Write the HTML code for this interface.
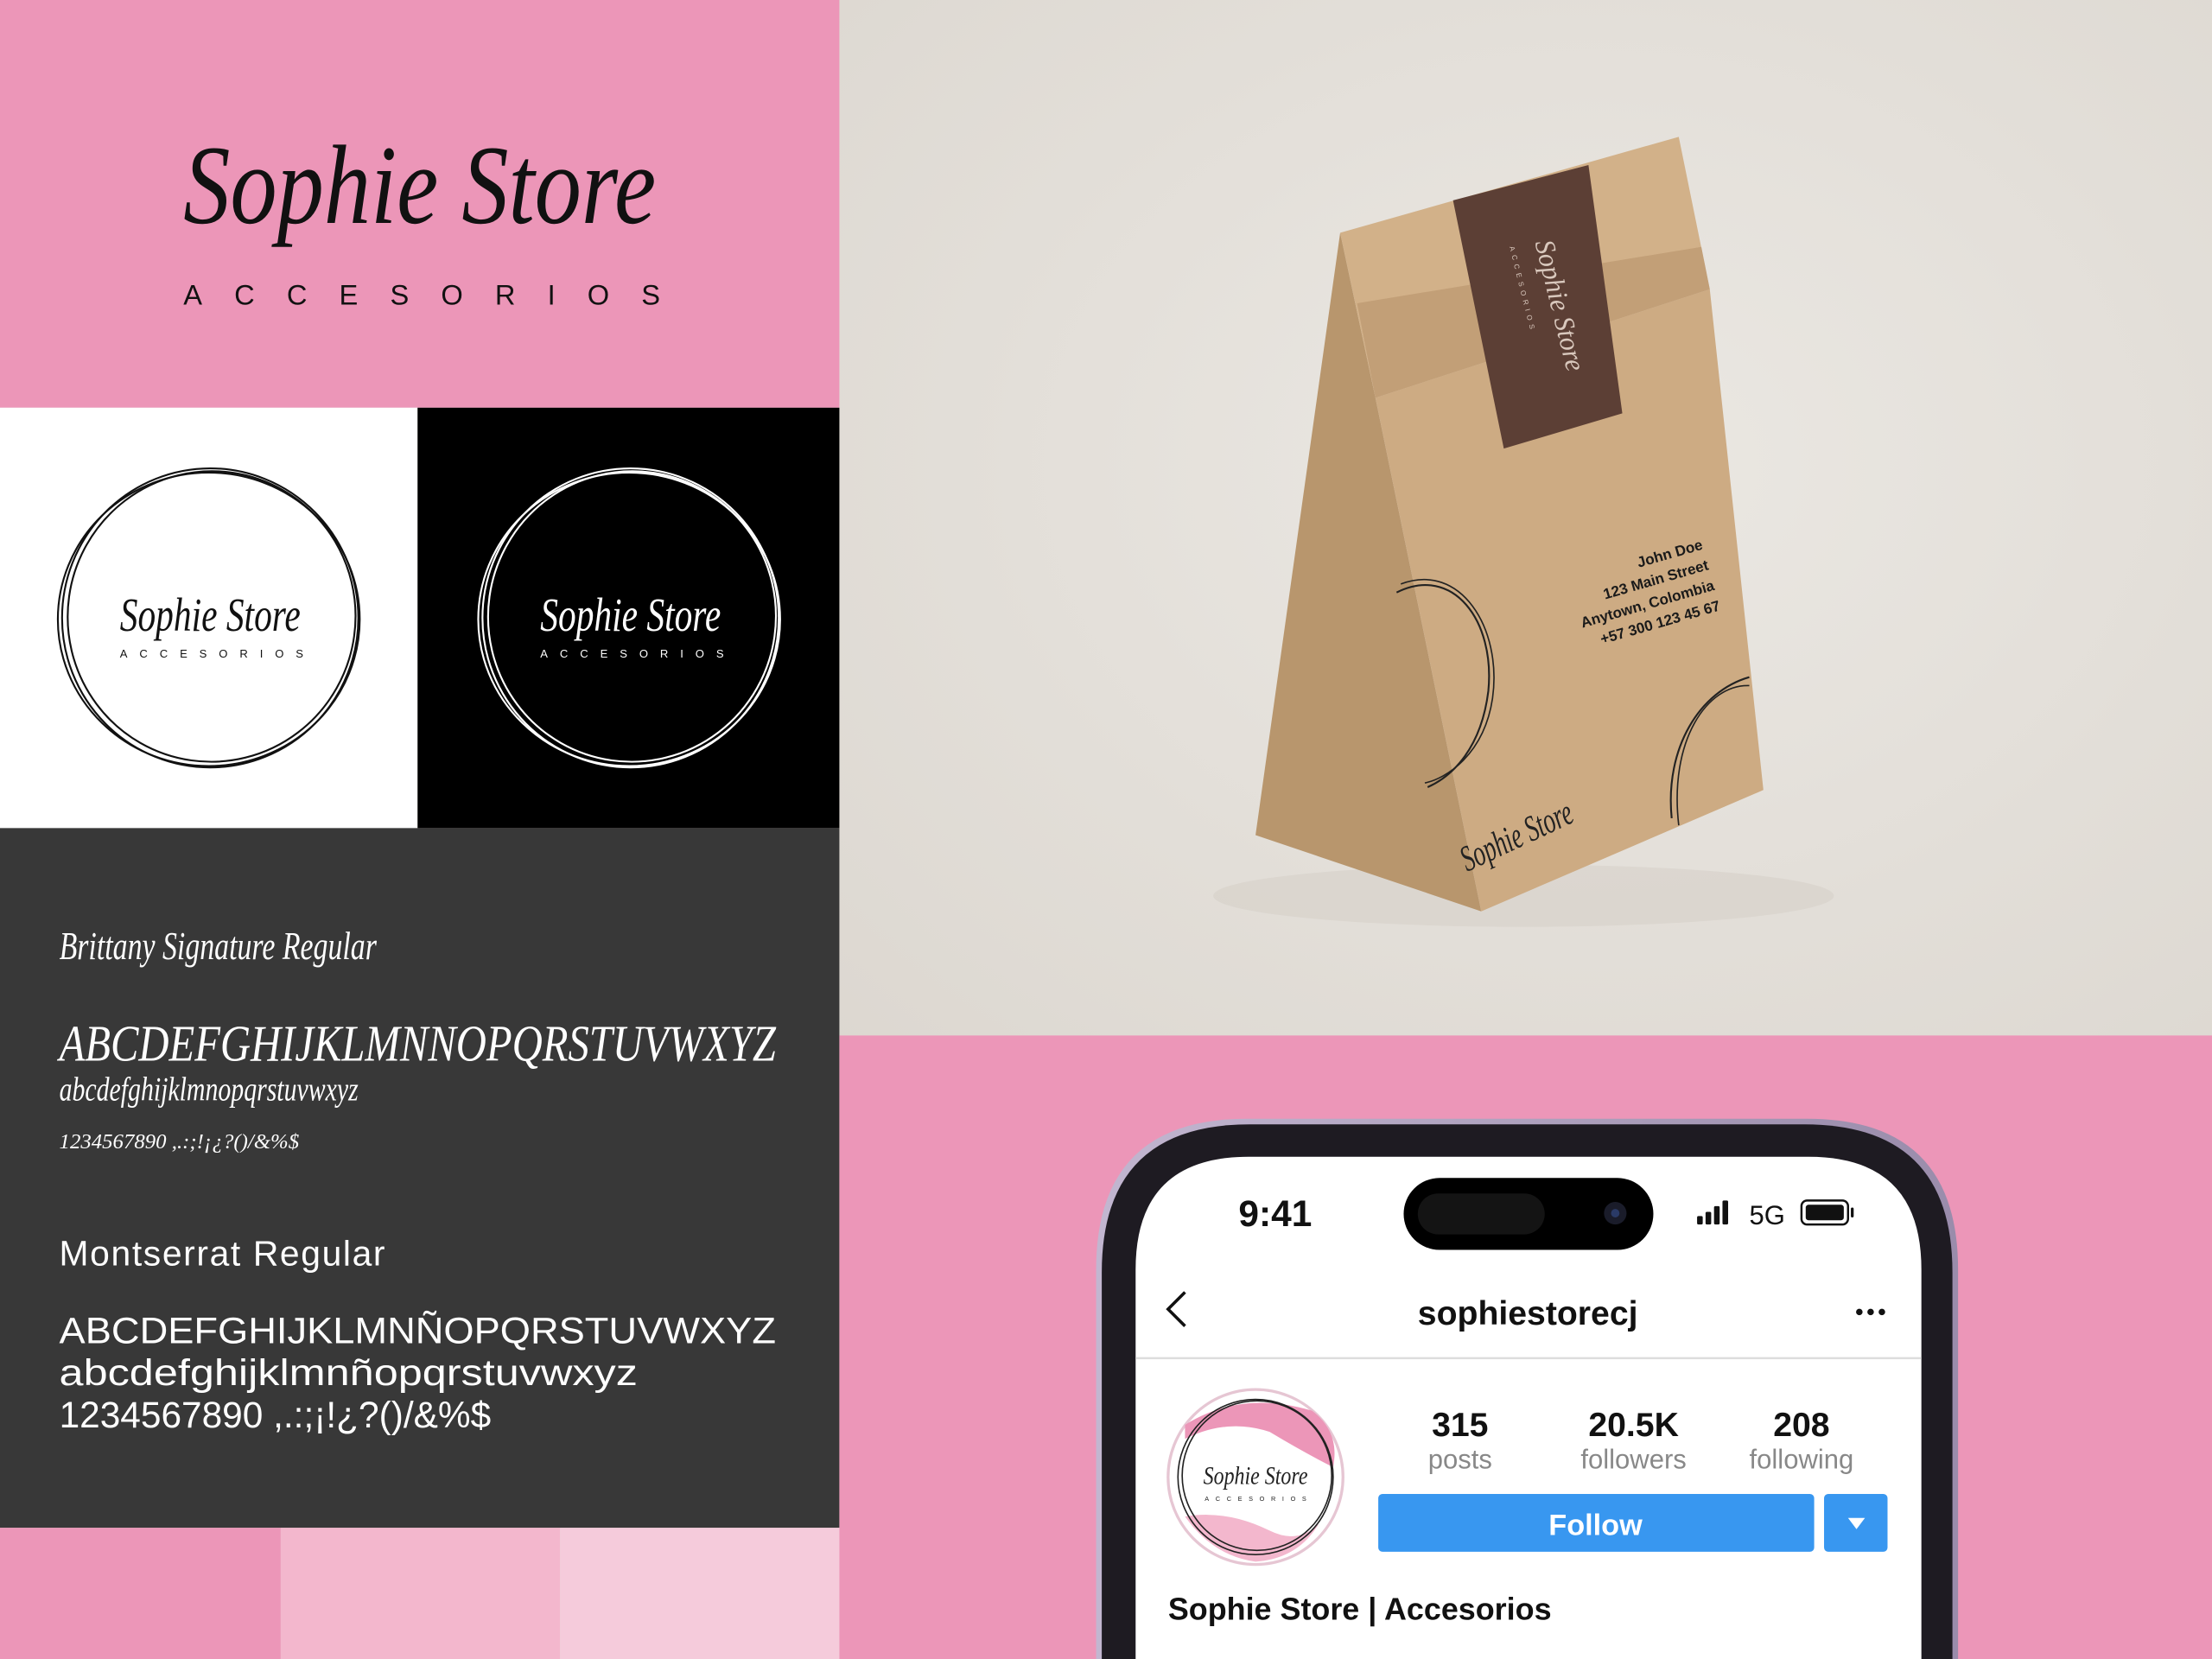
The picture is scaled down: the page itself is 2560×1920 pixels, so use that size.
<!DOCTYPE html>
<html><head><meta charset="utf-8"><style>
html,body{margin:0;padding:0;width:2560px;height:1920px;overflow:hidden;background:#e5e1dc}
svg{display:block}
.scr{font-family:"Liberation Serif",serif;font-style:italic}
.sans{font-family:"Liberation Sans",sans-serif}
</style></head><body>
<svg width="2560" height="1920" viewBox="0 0 1568 1176" xmlns="http://www.w3.org/2000/svg">
<defs>
<radialGradient id="bg" cx="0.55" cy="0.45" r="0.8"><stop offset="0" stop-color="#ebe8e3"/><stop offset="1" stop-color="#dcd7d0"/></radialGradient>
<linearGradient id="fr" x1="0" x2="1"><stop offset="0" stop-color="#c2b6d0"/><stop offset="1" stop-color="#9a8cab"/></linearGradient>
</defs>
<rect x="595" y="0" width="973" height="734" fill="url(#bg)"/>
<ellipse cx="1080" cy="635" rx="220" ry="22" fill="#d3cec6" opacity="0.5"/>
<polygon points="950,165 975,282 1050,646 890,592" fill="#b8966d"/>
<polygon points="975,282 1212,205 1250,560 1050,646" fill="#cdab83"/>
<polygon points="950,165 1190,97 1212,205 975,282" fill="#d2b189"/>
<polygon points="962,215 975,282 1212,205 1206,175" fill="#c29f77"/>
<polygon points="1030,142 1126,117 1150,293 1066,318" fill="#5c3f35"/>
<text x="1088" y="172" class="scr" font-size="20" fill="#d9c8bd" textLength="95" lengthAdjust="spacingAndGlyphs" transform="rotate(76 1088 172)">Sophie Store</text>
<text x="1070" y="175" class="sans" font-size="5" fill="#d9c8bd" letter-spacing="3" transform="rotate(76 1070 175)">ACCESORIOS</text>
<g transform="rotate(-16 1180 420)" class="sans" font-weight="bold" font-size="10.5" fill="#1a1a1a" text-anchor="end">
<text x="1215" y="398">John Doe</text><text x="1215" y="413">123 Main Street</text><text x="1215" y="428">Anytown, Colombia</text><text x="1215" y="443">+57 300 123 45 67</text></g>
<path d="M990,420 C1030,400 1060,440 1055,490 C1050,530 1030,550 1012,558" fill="none" stroke="#222" stroke-width="1.3"/>
<path d="M993,414 C1035,398 1065,445 1058,495 C1052,535 1025,552 1010,555" fill="none" stroke="#222" stroke-width="1"/>
<path d="M1185,580 C1180,530 1205,490 1240,480" fill="none" stroke="#222" stroke-width="1.3"/>
<path d="M1190,585 C1183,525 1210,485 1240,486" fill="none" stroke="#222" stroke-width="1"/>
<text x="1040" y="618" class="scr" font-size="26" fill="#222" textLength="85" lengthAdjust="spacingAndGlyphs" transform="rotate(-25 1040 618)">Sophie Store</text>
<rect x="0" y="0" width="595" height="289" fill="#ec96b8"/>
<text x="130" y="158" class="scr" font-size="80" fill="#111" textLength="335" lengthAdjust="spacingAndGlyphs">Sophie Store</text>
<text x="130" y="216" class="sans" font-size="20" fill="#111" textLength="338" lengthAdjust="spacing">ACCESORIOS</text>
<rect x="0" y="289" width="296" height="298" fill="#fff"/>
<rect x="296" y="289" width="299" height="298" fill="#000"/>
<g fill="none" stroke="#111" stroke-width="1.3"><ellipse cx="149" cy="438" rx="105" ry="106"/><ellipse cx="150" cy="437" rx="102" ry="103" transform="rotate(8 150 437)"/><ellipse cx="148" cy="439" rx="107" ry="104"/></g>
<text x="85" y="447" class="scr" font-size="34" fill="#111" textLength="128" lengthAdjust="spacingAndGlyphs">Sophie Store</text>
<text x="85" y="466" class="sans" font-size="8" fill="#111" textLength="130" lengthAdjust="spacing">ACCESORIOS</text>
<g fill="none" stroke="#fff" stroke-width="1.3"><ellipse cx="447" cy="438" rx="105" ry="106"/><ellipse cx="448" cy="437" rx="102" ry="103" transform="rotate(8 448 437)"/><ellipse cx="446" cy="439" rx="107" ry="104"/></g>
<text x="383" y="447" class="scr" font-size="34" fill="#fff" textLength="128" lengthAdjust="spacingAndGlyphs">Sophie Store</text>
<text x="383" y="466" class="sans" font-size="8" fill="#fff" textLength="130" lengthAdjust="spacing">ACCESORIOS</text>
<rect x="0" y="587" width="595" height="496" fill="#383838"/>
<g fill="#fff">
<text x="42" y="680" class="scr" font-size="28" textLength="225" lengthAdjust="spacingAndGlyphs">Brittany Signature Regular</text>
<text x="42" y="752" class="scr" font-size="36" textLength="508" lengthAdjust="spacingAndGlyphs">ABCDEFGHIJKLMNNOPQRSTUVWXYZ</text>
<text x="42" y="780" class="scr" font-size="24" textLength="212" lengthAdjust="spacingAndGlyphs">abcdefghijklmnopqrstuvwxyz</text>
<text x="42" y="814" class="scr" font-size="15" textLength="170" lengthAdjust="spacingAndGlyphs">1234567890 ,.:;!¡¿?()/&amp;%$</text>
<text x="42" y="897" class="sans" font-size="25" letter-spacing="1">Montserrat Regular</text>
<text x="42" y="952" class="sans" font-size="26" textLength="508" lengthAdjust="spacingAndGlyphs">ABCDEFGHIJKLMNÑOPQRSTUVWXYZ</text>
<text x="42" y="982" class="sans" font-size="26" textLength="410" lengthAdjust="spacingAndGlyphs">abcdefghijklmnñopqrstuvwxyz</text>
<text x="42" y="1012" class="sans" font-size="26" textLength="306" lengthAdjust="spacingAndGlyphs">1234567890 ,.:;¡!¿?()/&amp;%$</text>
</g>
<rect x="0" y="1083" width="199" height="93" fill="#ec96b8"/>
<rect x="199" y="1083" width="198" height="93" fill="#f3b7cd"/>
<rect x="397" y="1083" width="198" height="93" fill="#f5cbdb"/>
<rect x="595" y="734" width="973" height="442" fill="#ec96b8"/>
<path d="M777,1176 L777,900 Q777,793 884,793 L1281,793 Q1388,793 1388,900 L1388,1176 Z" fill="url(#fr)"/>
<path d="M781,1176 L781,902 Q781,797 886,797 L1279,797 Q1384,797 1384,902 L1384,1176 Z" fill="#1e1b22"/>
<path d="M805,1176 L805,900 Q805,820 885,820 L1282,820 Q1362,820 1362,900 L1362,1176 Z" fill="#fff"/>
<text x="904" y="869" class="sans" font-size="26" font-weight="bold" fill="#111" text-anchor="middle">9:41</text>
<rect x="995" y="835" width="177" height="51" rx="25.5" fill="#000"/>
<rect x="1005" y="846" width="90" height="29" rx="14.5" fill="#141414"/>
<circle cx="1145" cy="860" r="8" fill="#1a1c2a"/><circle cx="1145" cy="860" r="3" fill="#2a3a66"/>
<g fill="#111"><rect x="1203" y="862" width="4" height="6" rx="1"/><rect x="1209" y="859" width="4" height="9" rx="1"/><rect x="1215" y="855" width="4" height="13" rx="1"/><rect x="1221" y="851" width="4" height="17" rx="1"/></g>
<text x="1240" y="868" class="sans" font-size="19" fill="#111">5G</text>
<rect x="1277" y="851" width="33" height="17" rx="4" fill="none" stroke="#111" stroke-width="1.5"/>
<rect x="1280" y="854" width="27" height="11" rx="2" fill="#111"/>
<rect x="1312" y="856" width="2" height="7" rx="1" fill="#111"/>
<path d="M840,916 L828,928 L840,940" fill="none" stroke="#111" stroke-width="2.2"/>
<text x="1083" y="939" class="sans" font-size="24" font-weight="bold" fill="#111" text-anchor="middle">sophiestorecj</text>
<g fill="#111"><circle cx="1318" cy="930" r="2.3"/><circle cx="1326" cy="930" r="2.3"/><circle cx="1334" cy="930" r="2.3"/></g>
<rect x="805" y="962" width="557" height="1.5" fill="#ddd"/>
<circle cx="890" cy="1047" r="62" fill="#fff" stroke="#e6c6d3" stroke-width="2"/>
<path d="M840,1010 Q880,985 930,1000 Q950,1015 945,1040 Q925,1030 900,1015 Q870,1005 840,1020 Z" fill="#ec96b8"/>
<path d="M840,1075 Q870,1070 900,1085 Q920,1095 935,1080 Q920,1105 890,1107 Q860,1103 840,1075 Z" fill="#f3b7cd"/>
<g fill="none" stroke="#222" stroke-width="1"><circle cx="890" cy="1047" r="55"/><circle cx="891" cy="1046" r="53"/></g>
<text x="853" y="1052" class="scr" font-size="18" fill="#222" textLength="74" lengthAdjust="spacingAndGlyphs">Sophie Store</text>
<text x="854" y="1064" class="sans" font-size="4.5" fill="#222" textLength="72" lengthAdjust="spacing">ACCESORIOS</text>
<g class="sans" text-anchor="middle">
<text x="1035" y="1018" font-size="24" font-weight="bold" fill="#111">315</text>
<text x="1035" y="1041" font-size="19" fill="#888">posts</text>
<text x="1158" y="1018" font-size="24" font-weight="bold" fill="#111">20.5K</text>
<text x="1158" y="1041" font-size="19" fill="#888">followers</text>
<text x="1277" y="1018" font-size="24" font-weight="bold" fill="#111">208</text>
<text x="1277" y="1041" font-size="19" fill="#888">following</text>
</g>
<rect x="977" y="1059" width="309" height="41" rx="3" fill="#3897f0"/>
<text x="1131" y="1088" class="sans" font-size="21" font-weight="bold" fill="#fff" text-anchor="middle">Follow</text>
<rect x="1293" y="1059" width="45" height="41" rx="3" fill="#3897f0"/>
<path d="M1310,1076 L1322,1076 L1316,1084 Z" fill="#fff"/>
<text x="828" y="1148" class="sans" font-size="22" font-weight="bold" fill="#111">Sophie Store | Accesorios</text>
</svg>
</body></html>
